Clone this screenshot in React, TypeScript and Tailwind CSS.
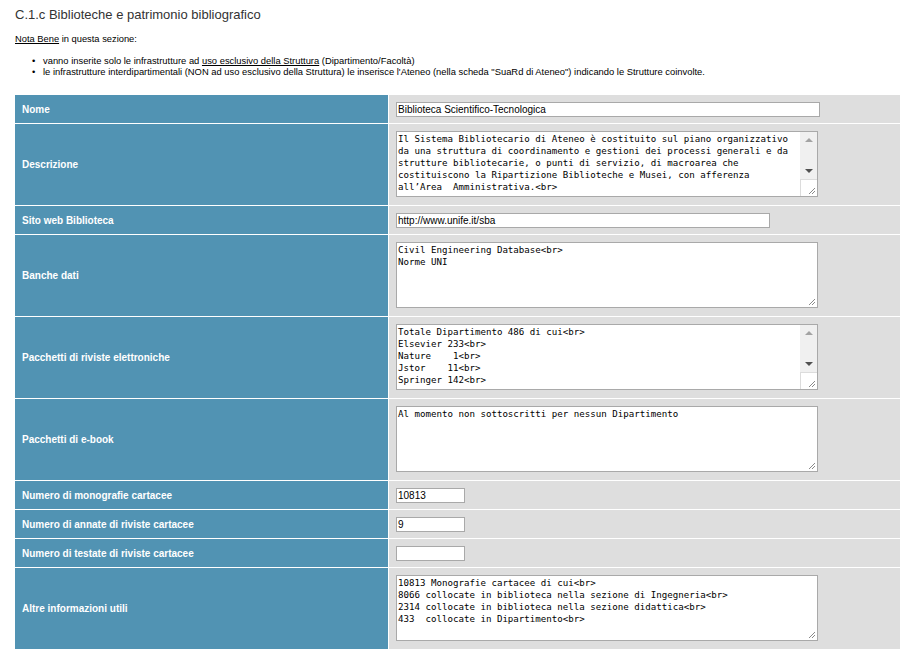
import React from "react";

type Row =
  | { label: string; kind: "input"; value: string; width: string }
  | { label: string; kind: "area"; lines: string[]; scroll?: boolean };

const rows: Row[] = [
  { label: "Nome", kind: "input", value: "Biblioteca Scientifico-Tecnologica", width: "w-[424px]" },
  {
    label: "Descrizione",
    kind: "area",
    scroll: true,
    lines: [
      "Il Sistema Bibliotecario di Ateneo è costituito sul piano organizzativo",
      "da una struttura di coordinamento e gestioni dei processi generali e da",
      "strutture bibliotecarie, o punti di servizio, di macroarea che",
      "costituiscono la Ripartizione Biblioteche e Musei, con afferenza",
      "all’Area  Amministrativa.<br>",
    ],
  },
  { label: "Sito web Biblioteca", kind: "input", value: "http://www.unife.it/sba", width: "w-[374px]" },
  { label: "Banche dati", kind: "area", lines: ["Civil Engineering Database<br>", "Norme UNI"] },
  {
    label: "Pacchetti di riviste elettroniche",
    kind: "area",
    scroll: true,
    lines: [
      "Totale Dipartimento 486 di cui<br>",
      "Elsevier 233<br>",
      "Nature    1<br>",
      "Jstor    11<br>",
      "Springer 142<br>",
    ],
  },
  { label: "Pacchetti di e-book", kind: "area", lines: ["Al momento non sottoscritti per nessun Dipartimento"] },
  { label: "Numero di monografie cartacee", kind: "input", value: "10813", width: "w-[69px]" },
  { label: "Numero di annate di riviste cartacee", kind: "input", value: "9", width: "w-[69px]" },
  { label: "Numero di testate di riviste cartacee", kind: "input", value: "", width: "w-[69px]" },
  {
    label: "Altre informazioni utili",
    kind: "area",
    lines: [
      "10813 Monografie cartacee di cui<br>",
      "8066 collocate in biblioteca nella sezione di Ingegneria<br>",
      "2314 collocate in biblioteca nella sezione didattica<br>",
      "433  collocate in Dipartimento<br>",
    ],
  },
];

function Grip() {
  return (
    <svg width="9" height="9" viewBox="0 0 9 9" className="block">
      <path d="M8 2 L2 8 M8 5 L5 8" stroke="#8a8a8a" strokeWidth="1" fill="none" />
    </svg>
  );
}

function TextBox({ lines, scroll }: { lines: string[]; scroll?: boolean }) {
  return (
    <div className="relative flex h-[66px] w-[422px] border border-[#a9a9a9] bg-white">
      <div className="flex-1 overflow-hidden whitespace-pre pl-[1px] pt-[1px] font-['DejaVu_Sans_Mono',monospace] text-[9.15px] leading-[12px] text-black">
        {lines.map((l, i) => (
          <div key={i}>{l}</div>
        ))}
      </div>
      {scroll ? (
        <div className="flex w-[17px] flex-col">
          <div className="flex flex-1 flex-col items-center justify-between bg-[#f0f0f0] py-[5px]">
            <svg width="8" height="5" viewBox="0 0 8 5">
              <path d="M0 5 L4 1 L8 5 Z" fill="#a3a3a3" />
            </svg>
            <svg width="8" height="5" viewBox="0 0 8 5">
              <path d="M0 0 L8 0 L4 4 Z" fill="#505050" />
            </svg>
          </div>
          <div className="flex h-[17px] items-end justify-end border-l border-t border-[#dcdcdc] bg-white pb-[1px] pr-[1px]">
            <Grip />
          </div>
        </div>
      ) : (
        <div className="absolute bottom-[1px] right-[1px]">
          <Grip />
        </div>
      )}
    </div>
  );
}

export default function App() {
  return (
    <div className="min-h-[651px] w-[900px] bg-white font-['Liberation_Sans',Arial,sans-serif] text-[#222]">
      <h1 className="pl-[15px] pt-[7px] text-[13px] leading-[15px] text-[#333]">
        C.1.c Biblioteche e patrimonio bibliografico
      </h1>

      <p className="mt-[12px] pl-[15px] text-[9.33px] leading-[11px] text-black">
        <span className="underline">Nota Bene</span> in questa sezione:
      </p>

      <ul className="mt-[10px] text-[9.4px] leading-[11px] text-black">
        <li className="flex pl-[32px]">
          <span className="w-[11px]">•</span>
          <span>
            vanno inserite solo le infrastrutture ad <span className="underline">uso esclusivo della Struttura</span>{" "}
            (Dipartimento/Facoltà)
          </span>
        </li>
        <li className="flex pl-[32px]">
          <span className="w-[11px]">•</span>
          <span>
            le infrastrutture interdipartimentali (NON ad uso esclusivo della Struttura) le inserisce l'Ateneo (nella
            scheda "SuaRd di Ateneo") indicando le Strutture coinvolte.
          </span>
        </li>
      </ul>

      <div className="ml-[15px] mt-[18px] grid w-[885px] grid-cols-[373px_1fr] gap-px bg-white">
        {rows.map((row) => {
          const tall = row.kind === "area";
          return (
            <React.Fragment key={row.label}>
              <div
                className={`flex items-center bg-[#5193b3] pl-[7px] text-[10px] font-bold text-white ${
                  tall ? "h-[81px]" : "h-[28px]"
                }`}
              >
                {row.label}
              </div>
              <div className={`bg-[#dedede] pl-[7px] pt-[7px] ${tall ? "h-[81px]" : "h-[28px]"}`}>
                {row.kind === "input" ? (
                  <div
                    className={`h-[15px] border border-[#a9a9a9] bg-white pl-[1px] text-[10px] leading-[13px] text-black ${row.width}`}
                  >
                    {row.value}
                  </div>
                ) : (
                  <TextBox lines={row.lines} scroll={row.scroll} />
                )}
              </div>
            </React.Fragment>
          );
        })}
      </div>
    </div>
  );
}
